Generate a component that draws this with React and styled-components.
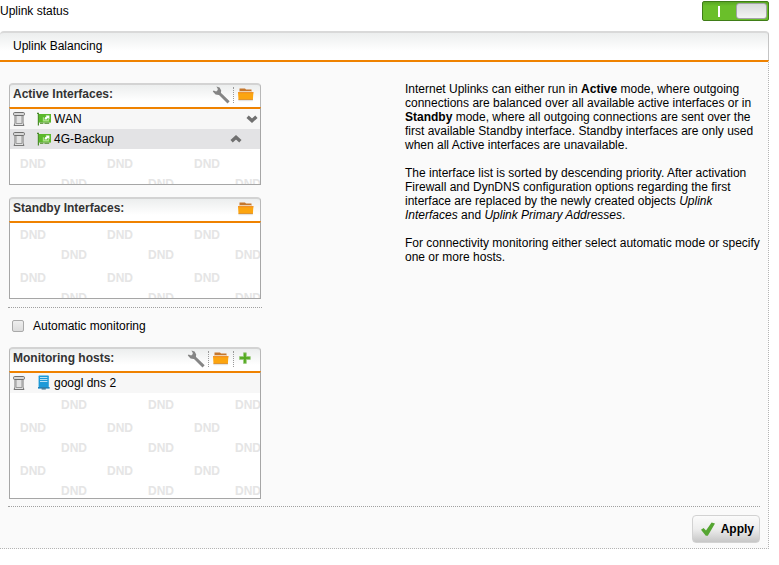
import React, { useState } from "react";
import styled, { createGlobalStyle } from "styled-components";

const GlobalStyle = createGlobalStyle`
  * {
    box-sizing: border-box;
  }
  body {
    margin: 0;
    background: #ffffff;
    color: #000000;
    font-family: "Liberation Sans", Arial, sans-serif;
    font-size: 12px;
    line-height: 14px;
  }
`;

const Page = styled.main`
  padding-right: 10px;
`;

const StatusBar = styled.div`
  display: flex;
  justify-content: space-between;
  height: 31px;
  padding-top: 1px;
`;

const StatusLabel = styled.label`
  padding-top: 3px;
`;

const Switch = styled.input`
  appearance: none;
  display: flex;
  align-items: center;
  justify-content: space-between;
  flex-direction: ${(props) => (props.checked ? "row" : "row-reverse")};
  width: 67px;
  height: 20px;
  margin: 0;
  padding: 0 1px 0 15px;
  border: 1px solid #3f7d17;
  border-radius: 2px;
  background: linear-gradient(#58a524, #6abf2a 4px);

  &::before {
    content: "";
    width: 2px;
    height: 11px;
    background: #ffffff;
  }
  &::after {
    content: "";
    box-sizing: border-box;
    width: 31px;
    height: 16px;
    border: 1px solid #a3a3a8;
    border-radius: 3px;
    background: linear-gradient(#d8dadb, #f4f4f4);
  }
`;

const PanelHeader = styled.h1`
  margin: 0;
  padding: 6px 13px 7px;
  border-top: 2px solid #d9d9d9;
  border-right: 1px solid #c4c4c4;
  border-radius: 4px 4px 0 0;
  background: linear-gradient(#eceeee, #ffffff 18px);
  font-size: 12px;
  font-weight: normal;
`;

const PanelBody = styled.form`
  padding: 20px 8px 5px;
  border-top: 2px solid #ef8200;
  border-right: 1px dotted #b4b4b4;
  border-bottom: 1px dotted #b4b4b4;
  background: #fafafa;
`;

const Columns = styled.div`
  display: grid;
  grid-template-columns: 254px minmax(0, 1fr);
  column-gap: 143px;
`;

const Lists = styled.div`
  padding-top: 1px;
`;

const Divider = styled.hr`
  height: 0;
  margin: ${(props) => props.$space || "0"};
  border: 0;
  border-top: 1px dotted #a0a0a0;
`;

const Box = styled.section`
  margin: 0 1px;

  & + & {
    margin-top: 12px;
  }
`;

const BoxHeader = styled.header`
  display: flex;
  justify-content: space-between;
  height: 24px;
  padding: 2px 2px 0 3px;
  border: 1px solid #b8b8b8;
  border-top: 2px solid #d3d3d3;
  border-bottom: 0;
  border-radius: 4px 4px 0 0;
  background: linear-gradient(#eceeee, #ffffff 16px);
`;

const BoxTitle = styled.h2`
  margin: 0;
  color: #333333;
  font-size: 12px;
`;

const Tools = styled.div`
  display: flex;
  height: 16px;
`;

const IconButton = styled.button`
  display: flex;
  align-items: center;
  justify-content: center;
  width: ${(props) => props.$width || "16px"};
  height: 16px;
  padding: 0;
  border: 0;
  background: none;
  cursor: pointer;
`;

const ToolButton = styled(IconButton)`
  width: 24px;

  & + & {
    width: 25px;
    border-left: 1px dotted #9a9a9a;
  }
`;

const BoxBody = styled.div`
  position: relative;
  overflow: hidden;
  height: ${(props) => (props.$tall ? "128px" : "78px")};
  border: 1px solid #a6a6a6;
  border-top: 2px solid #ef8200;
  background: #ffffff;
`;

const Watermark = styled.div`
  position: absolute;
  inset: 0;
  overflow: hidden;
  color: #e5e5e5;
  font-weight: bold;
  user-select: none;
`;

const WatermarkLine = styled.div`
  display: grid;
  grid-template-columns: repeat(3, 87px);
  height: ${(props) => (props.$shifted ? "23px" : "20px")};
  padding: 5px 0 0 ${(props) => (props.$shifted ? "51px" : "10px")};
`;

const Items = styled.ul`
  position: relative;
  margin: 0;
  padding: 0;
  list-style: none;
`;

const Item = styled.li`
  display: flex;
  align-items: center;
  height: 20px;
  padding-left: 3px;
  background: #f7f7f7;

  &:nth-child(even) {
    background: #e3e3e5;
  }
`;

const ItemIcon = styled.span`
  display: flex;
  justify-content: center;
  width: 14px;
  margin: 0 3px 0 12px;
`;

const ItemName = styled.span`
  flex: 1;
`;

const ArrowSlot = styled.span`
  width: 16px;
`;

const CheckRow = styled.label`
  display: flex;
  align-items: center;
  gap: 9px;
  padding: 11px 4px 14px;
`;

const Checkbox = styled.input`
  appearance: none;
  width: 12px;
  height: 12px;
  margin: 0;
  border: 1px solid #a9a9a9;
  border-radius: 2px;
  background: linear-gradient(#eeeeee, #dcdcdc);

  &:checked {
    background: #6abf2a;
  }
`;

const Help = styled.div`
  p {
    margin: 0 0 14px;
  }
`;

const Footer = styled.footer`
  display: flex;
  justify-content: flex-end;
`;

const ApplyButton = styled.button`
  display: flex;
  align-items: center;
  gap: 5px;
  height: 28px;
  padding: 0 5px 0 7px;
  border: 1px solid #d2d2d2;
  border-radius: 4px;
  background: linear-gradient(#fbfbfb, #ededed 50%, #c6c6c6);
  color: #000000;
  font: bold 12px/14px "Liberation Sans", Arial, sans-serif;
  cursor: pointer;
`;

const WrenchIcon = () => (
  <svg width="18" height="18" viewBox="0 0 18 18" fill="none">
    <path d="M7 7L16.6 16.4" stroke="#858585" strokeWidth="3" />
    <path
      d="M4.4 0.4L7.6 1.4L9.2 4.4L8.8 7.4L6.6 9L3.6 8.4L0.8 5.4L1.6 4.4L4.2 5.4L5.8 4L5.6 2.4Z"
      fill="#858585"
    />
  </svg>
);

const FolderIcon = () => (
  <svg width="16" height="16" viewBox="0 0 16 16">
    <path d="M1.5 1.6h5.5l1 1h5.5v2H1.5z" fill="#c5772d" />
    <path d="M1.5 4h12.5v1.4H1.5z" fill="#ecd2b2" />
    <path d="M0 5.2h15.4l-.5 7.6H.5z" fill="#fca510" />
    <path d="M0 5.2h15.4v1H0z" fill="#ee8a22" />
    <path d="M.5 12.2h14.4v1H.5z" fill="#d98c28" />
    <path d="M.6 13.2h14.2v1H.6z" fill="#e2e2e2" />
  </svg>
);

const PlusIcon = () => (
  <svg width="14" height="14" viewBox="0 0 14 14">
    <path
      d="M4.5.8h2.8v3.8h4v2.8h-4v4H4.5v-4h-4V4.6h4z"
      fill="#54ab20"
      stroke="#9ccc80"
      strokeWidth=".8"
    />
  </svg>
);

const TrashIcon = () => (
  <svg width="12" height="14" viewBox="0 0 12 14">
    <path d="M2 3.5h8v7.6l1 2.4H1l1-2.4z" fill="#e2e2e2" stroke="#777777" />
    <path d="M3.5 4v7M8.5 4v7" stroke="#bcbcbc" />
    <rect x=".5" y=".5" width="11" height="3" rx="1.2" fill="#d6d6d6" stroke="#6f6f6f" />
    <path d="M3 11.5h6" stroke="#999999" />
  </svg>
);

const CardIcon = () => (
  <svg width="14" height="14" viewBox="0 0 14 14">
    <path d="M0 .8h2v12.6H.8V2H0z" fill="#4b8a2c" />
    <path d="M1.8 2H14v8.6H1.8z" fill="#5cb82c" />
    <path d="M3 10.6h3.4V12H3zM7.4 10.6h4.8V12H7.4z" fill="#6f9f50" />
    <path d="M5.8 5.2h1.3v2.9h3.6V6.6H12v2.8H5.8z" fill="#a9de86" />
    <path d="M7.6 7.4c0-2 1-2.8 2-3L8.6 3.4h3.8v3.8l-1.2-1.2c-.8.2-1.2.6-1.4 1.4z" fill="#ffffff" />
  </svg>
);

const HostIcon = () => (
  <svg width="12" height="16" viewBox="0 0 12 16">
    <rect x=".6" y=".6" width="10.2" height="11.6" rx=".6" fill="#1d9ad8" />
    <path d="M2 2.5h7.4M2 4.5h7.4M2 6.5h7.4" stroke="#b9e1f4" />
    <path d="M0 12h11.6v1.6H0z" fill="#1b82bb" />
    <path d="M3.6 12.6h4.2v2H3.6z" fill="#4b7f9c" />
  </svg>
);

const ArrowIcon = ({ up }) => (
  <svg width="12" height="8" viewBox="0 0 12 8" fill="none">
    <path
      d={up ? "M1.6 6.3L6 2.3L10.4 6.3" : "M1.6 1.7L6 5.7L10.4 1.7"}
      stroke="#707070"
      strokeWidth="3.4"
    />
  </svg>
);

const CheckIcon = () => (
  <svg width="16" height="16" viewBox="0 0 16 16">
    <path d="M1 8.8L3.6 7L6 9.6L11.6 1.4L15 2.6L7.8 14.8L5.8 14.8Z" fill="#55a532" />
  </svg>
);

const tools = {
  edit: { label: "Edit", icon: <WrenchIcon /> },
  browse: { label: "Browse", icon: <FolderIcon /> },
  add: { label: "Add", icon: <PlusIcon /> },
};

const ListBox = ({ title, actions, items = [], icon, sortable, tall }) => (
  <Box>
    <BoxHeader>
      <BoxTitle>{title}</BoxTitle>
      <Tools>
        {actions.map((name) => (
          <ToolButton type="button" key={name} aria-label={tools[name].label}>
            {tools[name].icon}
          </ToolButton>
        ))}
      </Tools>
    </BoxHeader>
    <BoxBody $tall={tall}>
      <Watermark aria-hidden="true">
        {[0, 1, 2, 3, 4, 5].map((line) => (
          <WatermarkLine key={line} $shifted={line % 2 === 1}>
            <span>DND</span>
            <span>DND</span>
            <span>DND</span>
          </WatermarkLine>
        ))}
      </Watermark>
      <Items>
        {items.map((item, index) => (
          <Item key={item}>
            <IconButton type="button" $width="12px" aria-label={`Remove ${item}`}>
              <TrashIcon />
            </IconButton>
            <ItemIcon>{icon}</ItemIcon>
            <ItemName>{item}</ItemName>
            <ArrowSlot>
              {sortable && index > 0 && (
                <IconButton type="button" aria-label={`Move ${item} up`}>
                  <ArrowIcon up />
                </IconButton>
              )}
            </ArrowSlot>
            <ArrowSlot>
              {sortable && index < items.length - 1 && (
                <IconButton type="button" aria-label={`Move ${item} down`}>
                  <ArrowIcon />
                </IconButton>
              )}
            </ArrowSlot>
          </Item>
        ))}
      </Items>
    </BoxBody>
  </Box>
);

const App = () => {
  const [enabled, setEnabled] = useState(true);
  const [automatic, setAutomatic] = useState(false);

  return (
    <Page>
      <GlobalStyle />
      <StatusBar>
        <StatusLabel htmlFor="uplink-status">Uplink status</StatusLabel>
        <Switch
          id="uplink-status"
          type="checkbox"
          role="switch"
          checked={enabled}
          onChange={() => setEnabled(!enabled)}
        />
      </StatusBar>
      <PanelHeader>Uplink Balancing</PanelHeader>
      <PanelBody onSubmit={(e) => e.preventDefault()}>
        <Columns>
          <Lists>
            <ListBox
              title="Active Interfaces:"
              actions={["edit", "browse"]}
              items={["WAN", "4G-Backup"]}
              icon={<CardIcon />}
              sortable
            />
            <ListBox title="Standby Interfaces:" actions={["browse"]} />
            <Divider $space="8px 0 0" />
            <CheckRow>
              <Checkbox
                type="checkbox"
                checked={automatic}
                onChange={() => setAutomatic(!automatic)}
              />
              Automatic monitoring
            </CheckRow>
            <ListBox
              title="Monitoring hosts:"
              actions={["edit", "browse", "add"]}
              items={["googl dns 2"]}
              icon={<HostIcon />}
              tall
            />
          </Lists>
          <Help>
            <p>
              Internet Uplinks can either run in <b>Active</b> mode, where
              outgoing connections are balanced over all available active
              interfaces or in <b>Standby</b> mode, where all outgoing
              connections are sent over the first available Standby interface.
              Standby interfaces are only used when all Active interfaces are
              unavailable.
            </p>
            <p>
              The interface list is sorted by descending priority. After
              activation Firewall and DynDNS configuration options regarding
              the first interface are replaced by the newly created objects{" "}
              <i>Uplink Interfaces</i> and <i>Uplink Primary Addresses</i>.
            </p>
            <p>
              For connectivity monitoring either select automatic mode or
              specify one or more hosts.
            </p>
          </Help>
        </Columns>
        <Divider $space="7px 0 8px" />
        <Footer>
          <ApplyButton type="submit">
            <CheckIcon />
            Apply
          </ApplyButton>
        </Footer>
      </PanelBody>
    </Page>
  );
};

export default App;
